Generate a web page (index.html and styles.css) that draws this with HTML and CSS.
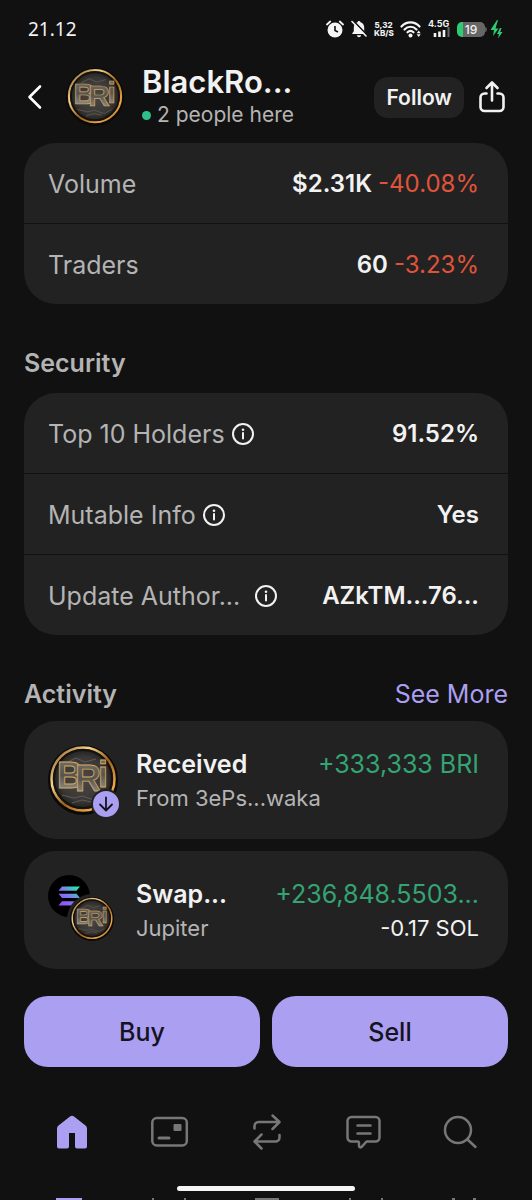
FILE: index.html
```html
<!DOCTYPE html>
<html lang="en">
<head>
    <meta charset="UTF-8">
    <meta name="viewport" content="width=device-width, initial-scale=1">
    <title>BlackRo...</title>
    <link rel="stylesheet" href="styles.css">
</head>
<body>

<!-- shared symbols -->
<svg class="symbols" width="0" height="0" aria-hidden="true">
    <defs>
        <linearGradient id="gold" x1="0" y1="0" x2="1" y2="1">
            <stop offset="0" stop-color="#7a4a14"/>
            <stop offset="0.3" stop-color="#f6d48a"/>
            <stop offset="0.55" stop-color="#9a5f1a"/>
            <stop offset="0.8" stop-color="#efa945"/>
            <stop offset="1" stop-color="#7c4c12"/>
        </linearGradient>
        <radialGradient id="stone">
            <stop offset="0" stop-color="#4a4744"/>
            <stop offset="0.7" stop-color="#3a3836"/>
            <stop offset="1" stop-color="#1c1b1a"/>
        </radialGradient>
        <linearGradient id="steel" x1="0" y1="0" x2="0" y2="1">
            <stop offset="0" stop-color="#7b746a"/>
            <stop offset="0.5" stop-color="#57534e"/>
            <stop offset="1" stop-color="#a5a19a"/>
        </linearGradient>
        <linearGradient id="sol" x1="0" y1="1" x2="1" y2="0">
            <stop offset="0" stop-color="#9945ff"/>
            <stop offset="0.5" stop-color="#7a7df0"/>
            <stop offset="1" stop-color="#19fb9b"/>
        </linearGradient>
        <symbol id="coin" viewBox="0 0 70 70">
            <circle cx="35" cy="35" r="35" fill="#0b0908"/>
            <circle cx="35" cy="34" r="31.5" fill="url(#stone)" stroke="url(#gold)" stroke-width="2.5"/>
            <circle cx="35" cy="34" r="29" fill="none" stroke="#14110e" stroke-width="2"/>
            <path d="M18 18l10-5 9 4 11-3M14 50l12 3 8-2 12 4 9-5M24 58l10-3 9 2" fill="none" stroke="#5e5a55" stroke-width="1"/>
            <g class="coin-text" fill="url(#steel)" stroke="#cfa662" stroke-width="0.9">
                <text x="9" y="43">B</text>
                <text x="27" y="46">R</text>
                <text x="50" y="42">i</text>
            </g>
        </symbol>
        <symbol id="info" viewBox="0 0 24 24">
            <circle cx="12" cy="12" r="10" fill="none" stroke="#f2f2f2" stroke-width="2"/>
            <circle cx="12" cy="7.7" r="1.3" fill="#f2f2f2"/>
            <path d="M12 11v5.5" stroke="#f2f2f2" stroke-width="2" stroke-linecap="round"/>
        </symbol>
    </defs>
</svg>

<div class="status-bar">
    <span class="clock">21.12</span>
    <div class="status-icons">
        <svg width="18" height="18" viewBox="0 0 18 18">
            <circle cx="9" cy="10" r="7.5" fill="#f5f5f5"/>
            <path d="M9 6v4.5l3 1.5" fill="none" stroke="#111" stroke-width="1.6"/>
            <path d="M1 4.5L4.2 1.5M17 4.5L13.8 1.5" stroke="#f5f5f5" stroke-width="1.8" stroke-linecap="round"/>
        </svg>
        <svg width="16" height="18" viewBox="0 0 16 18">
            <path d="M8 1c.9 0 1.400.6 1.500 1.300C12 3 13.200 5 13.200 7.500v3.700l1.500 2v.9H1.300v-.9l1.500-2V7.500C2.800 5 4 3 6.500 2.300 6.600 1.600 7.100 1 8 1zM5.800 15.300h4.400c-.3 1.200-1.200 1.900-2.200 1.900s-1.900-.7-2.200-1.900z" fill="#f5f5f5"/>
            <path d="M2.500 1L15.500 14.500" stroke="#111" stroke-width="1.800"/>
            <path d="M1 1.500L15 16" stroke="#f5f5f5" stroke-width="1.600" stroke-linecap="round"/>
        </svg>
        <span class="net-speed">5,32<br>KB/S</span>
        <svg width="21" height="18" viewBox="0 0 21 18">
            <g fill="none" stroke="#f5f5f5" stroke-width="2.200" stroke-linecap="round">
                <path d="M1.500 6.500C6.500 1 14.500 1 19.500 6.500"/>
                <path d="M4.500 9.500c3.500-3.700 8.500-3.700 12 0"/>
                <path d="M7.500 12.300c1.800-1.700 4.200-1.700 6 0"/>
            </g>
            <circle cx="10.500" cy="15.500" r="2" fill="#f5f5f5"/>
            <path d="M18.700 10.500l2 2.700h-4zM18.700 17l2-2.700h-4z" fill="#f5f5f5"/>
        </svg>
        <div class="signal">
            <span>4.5G</span>
            <svg width="22" height="18" viewBox="0 0 22 18">
                <path d="M7 13v4M11.500 11.500v5.500M16 10V17" stroke="#f5f5f5" stroke-width="2.600"/>
                <path d="M20.500 7v10" stroke="#666" stroke-width="2"/>
            </svg>
        </div>
        <div class="power">
            <div class="battery">19</div>
            <span class="nub"></span>
            <svg width="13" height="20" viewBox="0 0 12 20">
                <path d="M6.500 1L0 11h3.500L2.500 17 8 9.500H5L7.500 1z" fill="#2ecc71"/>
                <path d="M9.500 9L6.500 15h2L7.500 19.500 12 13H9.700L11 9z" fill="#2ecc71"/>
            </svg>
        </div>
    </div>
</div>

<header class="header">
    <button type="button" class="icon-btn" aria-label="Back">
        <svg width="22" height="26" viewBox="0 0 22 26">
            <path d="M16 2.500L5.500 13 16 23.500" fill="none" stroke="#fff" stroke-width="2.600" stroke-linecap="round" stroke-linejoin="round"/>
        </svg>
    </button>
    <svg class="header-coin" width="58" height="58"><use href="#coin"/></svg>
    <div class="header-info">
        <h1>BlackRo...</h1>
        <p><span class="dot"></span>2 people here</p>
    </div>
    <button type="button" class="follow">Follow</button>
    <button type="button" class="icon-btn" aria-label="Share">
        <svg width="28" height="34" viewBox="0 0 28 34" fill="none" stroke="#f2f2f2" stroke-width="2.600" stroke-linecap="round" stroke-linejoin="round">
            <path d="M8.500 13.500H6.500a4 4 0 0 0-4 4V27a4 4 0 0 0 4 4h15a4 4 0 0 0 4-4v-9.500a4 4 0 0 0-4-4h-2"/>
            <path d="M14 20.500V3M8.500 8L14 2.500 19.500 8"/>
        </svg>
    </button>
</header>

<main>
    <dl class="card">
        <div class="row">
            <dt>Volume</dt>
            <dd>$2.31K <span class="down">-40.08%</span></dd>
        </div>
        <div class="row">
            <dt>Traders</dt>
            <dd>60 <span class="down">-3.23%</span></dd>
        </div>
    </dl>

    <div class="section-head">
        <h2>Security</h2>
    </div>
    <dl class="card">
        <div class="row">
            <dt><span>Top 10 Holders</span>
                <button type="button" class="info" aria-label="About top 10 holders"><svg width="24" height="24"><use href="#info"/></svg></button>
            </dt>
            <dd>91.52%</dd>
        </div>
        <div class="row">
            <dt><span>Mutable Info</span>
                <button type="button" class="info" aria-label="About mutable info"><svg width="24" height="24"><use href="#info"/></svg></button>
            </dt>
            <dd>Yes</dd>
        </div>
        <div class="row">
            <dt><span class="clipped">Update Author...</span>
                <button type="button" class="info" aria-label="About update authority"><svg width="24" height="24"><use href="#info"/></svg></button>
            </dt>
            <dd>AZkTM...76...</dd>
        </div>
    </dl>

    <div class="section-head">
        <h2>Activity</h2>
        <a href="#">See More</a>
    </div>
    <div class="activity">
        <a href="#" class="item">
            <div class="token">
                <svg width="70" height="70"><use href="#coin"/></svg>
                <svg class="badge" width="30" height="30" viewBox="0 0 30 30">
                    <circle cx="15" cy="15" r="14" fill="#ab9ff2" stroke="#222" stroke-width="2"/>
                    <path d="M15 8.500v12.500M9 15.500l6 6 6-6" fill="none" stroke="#15131f" stroke-width="1.800" stroke-linecap="round" stroke-linejoin="round"/>
                </svg>
            </div>
            <div class="item-text">
                <div class="line"><strong>Received</strong><span class="up">+333,333 BRI</span></div>
                <div class="line sub"><span>From 3ePs...waka</span></div>
            </div>
        </a>
        <a href="#" class="item">
            <div class="token">
                <svg width="42" height="42" viewBox="0 0 42 42">
                    <circle cx="21" cy="21" r="21" fill="#000"/>
                    <path d="M14 11.500h18l-3.500 4.300h-18zM10.500 18.800h18l3.500 4.300H14zM14 26.200h18l-3.500 4.300h-18z" fill="url(#sol)"/>
                </svg>
                <svg class="second" width="50" height="50" viewBox="0 0 50 50">
                    <circle cx="25" cy="25" r="25" fill="#222"/>
                    <use href="#coin" x="3" y="3" width="44" height="44"/>
                </svg>
            </div>
            <div class="item-text">
                <div class="line"><strong>Swap...</strong><span class="up">+236,848.5503...</span></div>
                <div class="line sub"><span>Jupiter</span><span class="spent">-0.17 SOL</span></div>
            </div>
        </a>
    </div>
</main>

<div class="actions">
    <button type="button">Buy</button>
    <button type="button">Sell</button>
</div>

<nav class="tabs">
    <a href="#" aria-label="Home">
        <svg width="36" height="36" viewBox="0 0 36 36">
            <path d="M16 2.600a3 3 0 0 1 4 0L31.500 11.500a4 4 0 0 1 1.500 3V32.500a2 2 0 0 1-2 2H23a2 2 0 0 1-2-2V19H15v13.500a2 2 0 0 1-2 2H5a2 2 0 0 1-2-2V14.500a4 4 0 0 1 1.500-3z" fill="#ab9ff2"/>
        </svg>
    </a>
    <a href="#" aria-label="Wallet">
        <svg width="38" height="36" viewBox="0 0 38 36">
            <rect x="1.300" y="4" width="34.500" height="27.500" rx="4.500" fill="none" stroke="#777" stroke-width="2.500"/>
            <rect x="22.500" y="10" width="8" height="7" rx="1" fill="#777"/>
            <path d="M8 24h10" stroke="#777" stroke-width="3" stroke-linecap="round"/>
        </svg>
    </a>
    <a href="#" aria-label="Swap">
        <svg width="36" height="36" viewBox="0 0 36 36" fill="none" stroke="#777" stroke-width="2.500" stroke-linecap="round" stroke-linejoin="round">
            <path d="M5.500 14.500V12a4 4 0 0 1 4-4H30M23.500 1.500L30.500 8l-7 7"/>
            <path d="M30.500 21v2.500a4 4 0 0 1-4 4H6M12.500 20.500L5.500 27.500l7 7"/>
        </svg>
    </a>
    <a href="#" aria-label="Chat">
        <svg width="36" height="36" viewBox="0 0 36 36" fill="none" stroke="#777" stroke-width="2.500" stroke-linecap="round" stroke-linejoin="round">
            <path d="M5.500 3h24a4 4 0 0 1 4 4v16.500a4 4 0 0 1-4 4H20.500l-4.800 5.300a1.500 1.500 0 0 1-2.700-1v-3q0-1.300-1.300-1.300H5.500a4 4 0 0 1-4-4V7a4 4 0 0 1 4-4z"/>
            <path d="M11.500 11.500h13M11.500 19.500h13"/>
        </svg>
    </a>
    <a href="#" aria-label="Search">
        <svg width="36" height="36" viewBox="0 0 36 36" fill="none" stroke="#777" stroke-width="2.500" stroke-linecap="round">
            <circle cx="16" cy="16" r="13"/>
            <path d="M25.500 25.500l8 7.500"/>
        </svg>
    </a>
</nav>
<div class="home-bar"></div>
<!-- next row of tabs peeking in at the bottom edge -->
<div class="peek">
    <span class="peek-home"></span>
    <span class="peek-sides"></span>
    <span class="peek-top"></span>
    <span class="peek-sides"></span>
    <span class="peek-short"></span>
</div>

</body>
</html>
```

FILE: styles.css
```css
* {
    box-sizing: border-box;
    margin: 0;
    padding: 0;
}

body {
    background: #111;
    color: #f2f2f2;
    font-family: Inter, "Liberation Sans", sans-serif;
    font-size: 25px;
    line-height: 32px;
}

a {
    color: inherit;
    text-decoration: none;
}

button {
    border: 0;
    background: none;
    color: inherit;
    font-family: inherit;
    cursor: pointer;
}

svg {
    display: block;
    flex: none;
}

.symbols {
    position: absolute;
}

.coin-text {
    font-family: "Liberation Sans", sans-serif;
    font-size: 36px;
    font-weight: bold;
}

/* status bar */
.status-bar {
    display: flex;
    justify-content: space-between;
    align-items: center;
    height: 58px;
    padding: 0 29px 0 28px;
}

.clock {
    font-family: "Noto Sans", sans-serif;
    font-size: 19px;
}

.status-icons {
    display: flex;
    align-items: center;
    gap: 7px;
}

.net-speed {
    width: 19px;
    font-size: 8px;
    font-weight: 800;
    line-height: 8px;
    text-align: center;
}

.signal {
    position: relative;
}

.signal span {
    position: absolute;
    top: 0;
    left: 0;
    font-size: 9px;
    font-weight: 700;
    line-height: 8px;
}

.power {
    display: flex;
    align-items: center;
}

.battery {
    width: 28px;
    height: 15px;
    border-radius: 5px;
    background: linear-gradient(to right, #2ecc71 20%, #666 20%);
    font-size: 12px;
    font-weight: 500;
    line-height: 15px;
    text-align: center;
}

.nub {
    width: 2px;
    height: 5px;
    margin-right: 3px;
    border-radius: 0 2px 2px 0;
    background: #555;
}

/* header */
.header {
    display: flex;
    align-items: center;
    height: 85px;
    padding: 0 26px 7px 24px;
}

.header-coin {
    margin: 0 18px 0 20px;
}

.header-info {
    flex: 1;
    min-width: 0;
}

.header-info h1 {
    font-size: 31px;
    font-weight: 600;
    line-height: 36px;
}

.header-info p {
    display: flex;
    align-items: center;
    gap: 6px;
    color: #b4b4b4;
    font-size: 21px;
    line-height: 30px;
}

.dot {
    width: 9px;
    height: 9px;
    border-radius: 50%;
    background: #2ec08b;
}

.follow {
    height: 41px;
    margin-right: 14px;
    padding: 0 12px;
    border-radius: 14px;
    background: #222;
    font-size: 21px;
    font-weight: 600;
}

/* cards */
main {
    padding: 0 24px;
}

.card {
    border-radius: 32px;
    background: #222;
}

.row {
    display: flex;
    justify-content: space-between;
    align-items: center;
    height: 80px;
    padding: 2px 29px 0 24px;
}

.row + .row {
    height: 81px;
    border-top: 1px solid #111;
}

.row dt {
    display: flex;
    align-items: center;
    gap: 6px;
    color: #b4b4b4;
}

.row dd {
    font-size: 24px;
    font-weight: 600;
}

.clipped {
    width: 200px;
    white-space: nowrap;
}

.down {
    color: #e0533a;
    font-weight: 400;
}

.section-head {
    display: flex;
    justify-content: space-between;
    padding: 43px 0 11px;
}

.section-head + .card {
    margin-top: 3px;
}

.section-head h2 {
    color: #b4b4b4;
    font-size: 25px;
    font-weight: 600;
}

.section-head a {
    color: #ab9ff2;
}

/* activity */
.activity {
    display: grid;
    gap: 12px;
}

.item {
    display: flex;
    align-items: center;
    gap: 18px;
    padding: 24px 29px 24px 24px;
    border-radius: 32px;
    background: #222;
}

.token {
    position: relative;
    width: 70px;
    height: 70px;
}

.badge {
    position: absolute;
    right: -3px;
    bottom: -4px;
}

.second {
    position: absolute;
    right: 1px;
    bottom: 1px;
}

.item-text {
    flex: 1;
}

.line {
    display: flex;
    justify-content: space-between;
    line-height: 36px;
}

.line strong {
    font-weight: 600;
}

.sub {
    color: #b4b4b4;
    font-size: 22px;
    line-height: 32px;
}

.up {
    color: #33a474;
}

.spent {
    color: #f2f2f2;
}

/* buy / sell */
.actions {
    display: grid;
    grid-template-columns: 1fr 1fr;
    gap: 12px;
    padding: 27px 24px 0;
}

.actions button {
    height: 71px;
    border-radius: 24px;
    background: #ab9ff2;
    color: #15131f;
    font-size: 25px;
    font-weight: 500;
}

/* bottom tabs */
.tabs {
    display: flex;
    justify-content: space-between;
    padding: 47px 54px 36px;
}

.home-bar {
    width: 178px;
    height: 5px;
    margin: 0 auto 7px;
    border-radius: 3px;
    background: #f5f5f5;
}

.peek {
    display: flex;
    justify-content: space-between;
    height: 2px;
    padding: 0 56px;
}

.peek span {
    width: 34px;
}

.peek .peek-home {
    width: 26px;
    background: #ab9ff2;
}

.peek .peek-sides {
    border: solid #777;
    border-width: 0 2px;
}

.peek .peek-top {
    width: 24px;
    background: #777;
}

.peek .peek-short {
    width: 24px;
    border: solid #777;
    border-width: 0 3px;
}
```
